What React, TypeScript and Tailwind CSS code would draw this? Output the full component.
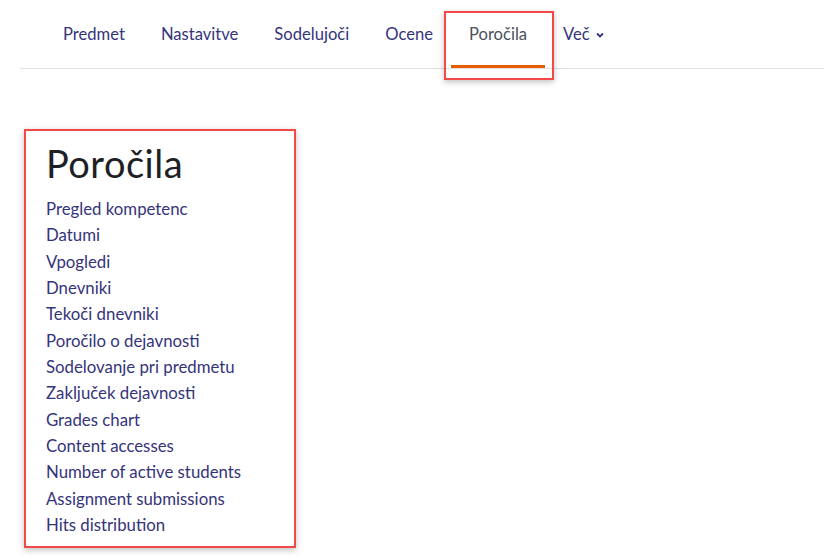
import React from "react";

const tabs = ["Predmet", "Nastavitve", "Sodelujoči", "Ocene"];
const links = [
  "Pregled kompetenc",
  "Datumi",
  "Vpogledi",
  "Dnevniki",
  "Tekoči dnevniki",
  "Poročilo o dejavnosti",
  "Sodelovanje pri predmetu",
  "Zaključek dejavnosti",
  "Grades chart",
  "Content accesses",
  "Number of active students",
  "Assignment submissions",
  "Hits distribution",
];

export default function App() {
  return (
    <div
      className="w-[824px] h-[560px] bg-white overflow-hidden"
      style={{ fontFamily: "Lato, 'Noto Sans', sans-serif" }}
    >
      <div className="ml-[20px] h-[69px] border-b border-[#dee2e6] flex items-stretch pl-[25px] text-[16.6px] text-[#35347a]">
        {tabs.map((t) => (
          <div key={t} className="px-[18px] flex items-center pt-[1px]">
            {t}
          </div>
        ))}
        <div className="relative flex items-stretch">
          <div className="absolute left-[-7px] right-[-9px] top-[11px] bottom-[-12px] border-2 border-[#f24848] shadow-[0_2px_6px_rgba(0,0,0,0.25)]" />
          <div className="px-[18px] flex items-center pt-[4px] text-[#4a505a] border-b-[3px] border-[#e65c00] h-[68px] box-border">
            Poročila
          </div>
        </div>
        <div className="px-[18px] flex items-center gap-[5px] pt-[1px]">
          Več
          <svg width="10" height="10" viewBox="0 0 10 10" className="mt-[1px]">
            <path d="M2 3.5 L5 6.5 L8 3.5" stroke="#35347a" strokeWidth="1.8" fill="none" />
          </svg>
        </div>
      </div>
      <div className="mt-[60px] ml-[24px] w-[272px] h-[419px] border-2 border-[#f24848] shadow-[0_2px_6px_rgba(0,0,0,0.25)] pl-[20px] pt-[11px]">
        <h2 className="text-[38px] leading-[42px] tracking-[0.5px] text-[#1d2125] mb-[12px]">Poročila</h2>
        <ul className="flex flex-col">
          {links.map((l) => (
            <li key={l} className="text-[16.8px] leading-[26.33px] text-[#35347a]">
              {l}
            </li>
          ))}
        </ul>
      </div>
    </div>
  );
}
